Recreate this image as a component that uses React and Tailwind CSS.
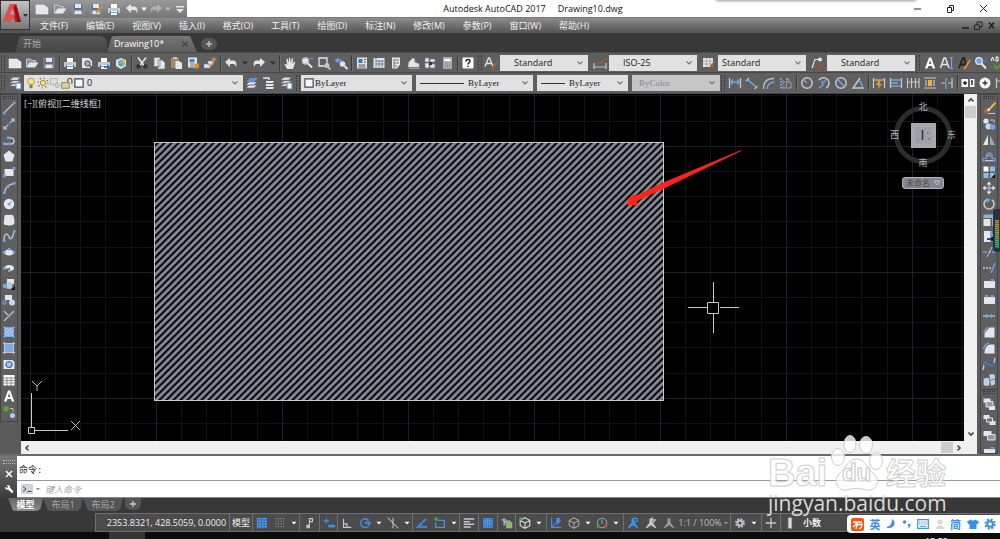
import React, { useState } from "react";
import clsx from "clsx";

const W = "#e3e7ed";
const B = "#6fa4e8";
const O = "#e08a2c";
const G = "#c4c6ca";

const sheet = <path d="M2 4h8l4 3v6H2z" fill={W} stroke="#fff" strokeWidth="0.5" />;
const pencil = <path d="M8 10l5-6 1.5 1.5L9.5 12 7.5 12.5z" fill={O} />;
const dimBar = <path d="M2.5 3v10M13.5 3v10" stroke={G} strokeWidth="1.3" />;
const folder = (
  <>
    <path d="M2.5 12V4h4l1 1.5h4V8" fill="#8292a4" stroke={G} />
    <path d="M2.5 12.5l3-5h9l-3.5 5z" fill={W} />
  </>
);
const disk = (
  <>
    <path d="M3 3h10v10H3z" fill="#5d7088" stroke="#8ea2bb" strokeWidth="0.8" />
    <path d="M5 3h6v4H5zM4.5 9.5h7v3.5h-7z" fill={W} />
  </>
);
const printer = (
  <>
    <path d="M5 3h6v4H5zM5 10h6v4H5z" fill="#fff" />
    <path d="M2 7h12v5h-2v-2H4v2H2z" fill={G} />
    <path d="M5 11.5h6" stroke={B} />
  </>
);
const undoArrow = <path d="M2 7l5-4v2.5h3c3 0 4 2 3 7-.5-3-1.500-3.500-3-3.500H7V12z" fill={W} />;
const gear = (
  <>
    <circle cx="8" cy="8" r="4.400" fill="none" stroke="currentColor" strokeWidth="2.400" strokeDasharray="2 1.450" />
    <circle cx="8" cy="8" r="2.800" fill="none" stroke="currentColor" strokeWidth="2" />
  </>
);

const ICONS = {
  new: sheet,
  open: folder,
  save: disk,
  saveas: <>{disk}{pencil}</>,
  print: printer,
  undo: undoArrow,
  redo: <g transform="matrix(-1 0 0 1 16 0)">{undoArrow}</g>,
  down: <path d="M4 6h8l-4 4.500z" fill="currentColor" />,
  more: <path d="M4 5h8v1.500H4zM4 8h8l-4 4z" fill={W} />,
  preview: (
    <>
      <path d="M3 3h7l3 3v7H3z" fill={W} />
      <circle cx="8.500" cy="8.500" r="2.700" fill="#9fb2c8" stroke="#444" />
      <path d="M10.500 10.500l3 3" stroke="#444" strokeWidth="1.500" />
    </>
  ),
  publish: <>{printer}<path d="M8 11h3V9l3.500 3-3.500 3v-2H8z" fill="#3873c4" /></>,
  dwf: (
    <>
      <path d="M3 5l5-2 5 2v6l-5 3-5-3z" fill={W} />
      <circle cx="8.500" cy="8" r="3.600" fill="#65b4d4" />
      <path d="M9 4.500a3.500 3.500 0 0 1 3 4H9z" fill="#e4a646" />
      <path d="M5.500 9h3v3z" fill="#68a842" />
    </>
  ),
  cut: (
    <>
      <path d="M4 2.500l6 8M12 2.500l-6 8" stroke={W} strokeWidth="1.500" />
      <path d="M4.500 10a1.500 1.500 0 1 0 .1 0M11.500 10a1.500 1.500 0 1 0 .1 0" fill="none" stroke="#222" strokeWidth="1.300" />
    </>
  ),
  copy: <path d="M3 2.500h6v9H3zM7 5h4l3 2.500V14H7z" fill={W} stroke="#777" strokeWidth="0.700" />,
  paste: (
    <>
      <path d="M3 3h8v10H3z" fill="#a9885e" />
      <path d="M5 2h4v2H5z" fill={G} />
      <path d="M7.500 6h3.500l3 2v6H7.500z" fill={W} />
    </>
  ),
  match: (
    <>
      <path d="M3 2.500h9v10H3z" fill={W} />
      <path d="M4.500 4h5v3.500h-5z" fill="#4f84cc" />
      <path d="M5 9h5M5 11h4" stroke="#777" />
      <path d="M9 11l2-2.500h3V13l-3 1z" fill={O} />
    </>
  ),
  block: (
    <>
      <path d="M2 9h6v4H2zM6 6h5v4H6z" fill={W} stroke="#889" strokeWidth="0.600" />
      <path d="M12 2v5M9.500 4.500h5M8 12l4-5" stroke={O} strokeWidth="1.400" />
    </>
  ),
  pan: (
    <path d="M5 14L2.500 9.500l1-.8L5 10 4.500 4l1.200-.3L7 8V2.800h1.200L8.700 8 10 3.300l1.200.3L10.500 9l1.800-2.500 1 .6L11 14z" fill={W} />
  ),
  zoom: (
    <>
      <circle cx="6.500" cy="6" r="3" fill={W} stroke={G} strokeWidth="1.400" />
      <path d="M9 8.500l4 4" stroke={W} strokeWidth="2" />
      <path d="M11 3.500h3" stroke={B} />
    </>
  ),
  zoomwin: (
    <>
      <path d="M3 3h8v8H3z" fill="none" stroke={W} strokeWidth="1.300" />
      <circle cx="11" cy="10.500" r="2.500" fill={G} />
      <path d="M12.500 12.500l2 2" stroke={W} strokeWidth="1.500" />
    </>
  ),
  zoomprev: (
    <>
      <path d="M1.500 5.500l4-3v2h3v2h-3v2z" fill={B} />
      <circle cx="9.500" cy="9" r="2.700" fill={W} />
      <path d="M11.500 11l3 3" stroke={W} strokeWidth="1.800" />
    </>
  ),
  props: (
    <>
      <path d="M3 2.500h10v11H3z" fill={W} />
      <path d="M4.500 4h4v4h-4z" fill="#3974c6" />
      <path d="M10 4.500h2M10 7h2M4.500 10h7M4.500 12h7" stroke="#555" />
    </>
  ),
  center: (
    <>
      <path d="M2.500 3h11v10h-11z" fill={W} />
      <path d="M5 3v10M5 6h8M5 9h8M8 5v8M11 5v8" stroke="#68809c" />
    </>
  ),
  palettes: (
    <>
      <path d="M4 2.500h8v7l-3 4H4z" fill={W} />
      <path d="M6 4v9M6 5h5M6 8h5M6 11h3" stroke="#777" />
    </>
  ),
  sheets: <path d="M3 12l1-5 4-4 2 2-1 2 5 2v3zM4 13.500h11" fill={W} stroke={G} strokeWidth="0.600" />,
  markup: (
    <>
      <path d="M3 3h4v4H3zM8 4h5v3H8zM3 8h4v5H3zM8 9h5v4H8z" fill={W} stroke="#68809c" strokeWidth="0.700" />
      <path d="M7 7h3v3H7z" fill="#333" />
    </>
  ),
  calc: (
    <>
      <path d="M4.500 2.500h8v11h-8z" fill="#aeb8c4" stroke={G} strokeWidth="0.600" />
      <path d="M5.500 4h6v2h-6z" fill="#fff" />
      <path d="M5.500 8h6M5.500 10h6M5.500 12h6" stroke="#6d7782" strokeDasharray="1.400 0.800" />
    </>
  ),
  help: (
    <>
      <rect x="2.500" y="2.500" width="11" height="11" rx="1" fill="#fff" />
      <path d="M6 6.500c0-3 4.500-2.500 4 0-.3 1.200-2 1-2 3M8 10.700v1.300" fill="none" stroke="#222" strokeWidth="1.500" />
    </>
  ),
  textstyle: (
    <>
      <path d="M2 11.500L5.500 3h1L10 11.500M3.500 8.500h5" fill="none" stroke={W} strokeWidth="1.300" />
      <path d="M14 6L9.500 11l-1.500 3.500c3 0 3.500-1 3.500-2.500L14.500 7z" fill="#b0622c" />
    </>
  ),
  dimstyle: (
    <>
      <path d="M2 8v6M14 8v6M2 12h12" stroke={G} strokeWidth="1.200" />
      <path d="M14 2L9.500 6.500 5 7.500c1 2.500 4 2 5.500 0L14.500 3z" fill="#a85822" />
    </>
  ),
  tablestyle: (
    <>
      <path d="M2 3h10v9H2z" fill={W} />
      <path d="M2 6h10M2 9h10M5.500 3v9M9 3v9" stroke="#999" strokeWidth="0.700" />
      <path d="M14.500 5L10 9.500 8.500 13c3 0 3.500-1 3.500-2.500z" fill="#b0622c" />
    </>
  ),
  leader: (
    <>
      <path d="M2 13L5 4.500h4" fill="none" stroke={W} strokeWidth="1.200" />
      <circle cx="10" cy="4.500" r="2" fill={W} />
      <path d="M14 7l-4 3-2.500 4c3 0 4.500-1 5-3z" fill="#a85822" />
    </>
  ),
  bigA: <path d="M3 13.500L7 2.500h2.200l4 11h-2.400l-.8-2.500H6.300l-.8 2.500zM6.900 9h2.500L8.100 5z" fill="#fff" fillRule="evenodd" />,
  textA: (
    <>
      <path d="M1.500 13L5 3h1.500L10 13M3 9.500h5.500" fill="none" stroke={W} strokeWidth="1.500" />
      <path d="M12.500 2.500v11M11 2.500h3M11 13.500h3" stroke={B} strokeWidth="1.200" />
    </>
  ),
  editA: (
    <>
      <path d="M3 13L7 3h1l2.500 8M4.500 9.500h5" fill="none" stroke="#222" strokeWidth="1.800" />
      <path d="M14 5L9 13l-1 1" stroke={O} strokeWidth="2" />
    </>
  ),
  find: (
    <>
      <circle cx="6" cy="6" r="3.300" fill={B} stroke={W} strokeWidth="1.200" />
      <path d="M8.500 8.500l4.500 5" stroke={W} strokeWidth="2" />
      <path d="M11 3v6M13 4v4" stroke="#3974c6" />
    </>
  ),
  spell: (
    <>
      <path d="M1 6l1.500-4L4 6M6 2v4h2V2zM13 2.500h-2v3h2" fill="none" stroke="#fff" />
      <path d="M4 10l3 3.500L13 7" fill="none" stroke="#4ca32c" strokeWidth="2" />
    </>
  ),
  layers: (
    <>
      <path d="M3 5l3-2.500h7L10.500 5zM3 8l3-2h7l-2.500 2zM3 11l3-2h7l-2.500 2z" fill={W} stroke="#888" strokeWidth="0.500" />
      <path d="M9 8h5v6H9z" fill="#fff" stroke="#4f84cc" />
    </>
  ),
  layerup: (
    <>
      <path d="M2 13l3-3h8l-3 3zM2 10l3-3h8l-3 3z" fill={W} stroke="#667" strokeWidth="0.600" />
      <path d="M2 7l4-4h8l-4 4z" fill="#5d93d8" />
    </>
  ),
  layerprev: (
    <>
      <path d="M5 6h8l-1 2H5zM5 9h8l-1 2H5zM5 12h8l-1 2H5z" fill={W} />
      <path d="M2 3h6v2" fill="none" stroke={W} strokeWidth="1.400" />
    </>
  ),
  bulb: (
    <>
      <circle cx="8" cy="6" r="4.500" fill="#f8e08a" stroke="#a98a2e" strokeWidth="1" />
      <path d="M6 10.500h4V15H6z" fill="#777" />
    </>
  ),
  sun: (
    <>
      <circle cx="8" cy="8" r="3.500" fill="#f6df7e" stroke="#8c7a3a" />
      <circle cx="8" cy="8" r="6.500" fill="none" stroke="#8c7a3a" strokeDasharray="1.600 3.500" strokeWidth="2" />
    </>
  ),
  vpfreeze: (
    <>
      <path d="M2 2h9v8H2z" fill="#ddd" stroke="#aaa" />
      <circle cx="11" cy="11" r="3.200" fill="#ccc" stroke="#999" strokeDasharray="1.500 1" />
    </>
  ),
  lock: (
    <>
      <path d="M1 7.500h10V15H1z" fill="#e0d294" stroke="#74693a" />
      <path d="M9 7V4.500C9 1 14.500 1 14.500 4.500V9" fill="none" stroke="#666" strokeWidth="1.800" />
    </>
  ),
  swatch: <path d="M2.500 2.500h11v11h-11z" fill="#f7faff" stroke="#3c4d63" strokeWidth="1.600" />,
  dimlin: <>{dimBar}<path d="M3.500 7h9M6 4.500L3.500 7 6 9.500M10 4.500L12.500 7 10 9.500" fill="none" stroke={B} strokeWidth="1.300" /></>,
  dimalign: <><path d="M2 6l3-3M10.500 14l3-3" stroke={G} strokeWidth="1.300" /><path d="M4 5l8 7" stroke={B} strokeWidth="1.600" /></>,
  dimarc: <><path d="M2.500 14C2.500 7 6 3.500 13 3.500" fill="none" stroke={G} strokeWidth="1.300" /><path d="M6 14c0-4 2-6 7.500-7" fill="none" stroke={B} strokeWidth="1.600" /></>,
  dimord: <><path d="M3 3v10h4M9 3l4 5v5H8z" fill="none" stroke={G} strokeDasharray="2 1" /><path d="M5 7h7M5 5v9M10 3v5" stroke={B} strokeDasharray="2 1" /></>,
  radius: <><circle cx="8" cy="8" r="5.200" fill="none" stroke={G} strokeWidth="1.500" /><path d="M8 8L4.500 4.500" stroke={B} strokeWidth="1.500" /></>,
  jogged: <><path d="M3 5c3-4 10-2 10 3 0 3-1 4-3 5" fill="none" stroke={G} strokeWidth="1.500" /><path d="M3 13l4-3-1-3 4-1" fill="none" stroke={B} strokeWidth="1.400" /></>,
  diameter: <><circle cx="8" cy="8" r="5.200" fill="none" stroke={G} strokeWidth="1.500" /><path d="M4.500 4.500l7 7" stroke={B} strokeWidth="1.600" /></>,
  angular: <><path d="M10 3L3 13h11" fill="none" stroke={G} strokeWidth="1.500" /><path d="M9 6c2 1 3 3 3 6" fill="none" stroke={B} strokeWidth="1.400" /></>,
  quick: <>{dimBar}<path d="M3 5h10" stroke={G} /><path d="M8 5l-3 5h2.500L7 14l4-5H8.500L10 5z" fill="#f09a28" /></>,
  base: <>{dimBar}<path d="M3 5h10M3 11h10" stroke={B} strokeWidth="1.500" /><path d="M3 8h7" stroke={G} /></>,
  cont: <path d="M2.500 3v10M6.500 3v10M10.500 3v10M14 3v10M2.500 7H14" stroke={G} strokeWidth="1.200" />,
  space: <><path d="M2 3h12M2 13h12M4 5v6M12 5v6" stroke={G} strokeWidth="1.200" /><path d="M6 5h4v6H6z" fill="#e7b437" /></>,
  brk: <><path d="M2 8h5M9 8h5M13 3v10" stroke={G} strokeWidth="1.200" /><path d="M7 3v4M7 9v5" stroke={B} strokeWidth="1.400" /></>,
  tol: <><path d="M1.500 4h13v8h-13z" fill="#fff" /><path d="M3 8h4M5 6v4M9 4v8M11 6h1v4" fill="none" stroke="#222" strokeWidth="1.400" /></>,
  cmark: <><circle cx="8" cy="8" r="5.500" fill="#f4f4f4" /><path d="M5.500 8h5M8 5.500v5" stroke="#333" strokeWidth="1.300" /></>,
  insp: <>{dimBar}<path d="M3 6h8" stroke={G} /><path d="M6 11l3 3 4-5" fill="none" stroke="#4ca32c" strokeWidth="2" /></>,

  line: <><path d="M3 13L13 3" stroke={G} strokeWidth="1.300" /><path d="M2 12h2.500v2.500H2zM12 1.500h2.500V4H12z" fill={B} /></>,
  xline: <><path d="M3.500 12.500l9-9M3 10v3h3M10 3h3v3" fill="none" stroke={G} strokeWidth="1.200" /><path d="M6.500 6.500h3v3h-3z" fill="#3f7ad0" /></>,
  pline: <><path d="M4 12h6c4 0 4-6 0-6H8" fill="none" stroke={G} strokeWidth="1.400" /><path d="M2 10.500h2.800v2.800H2zM7 10.500h2.800v2.800H7zM6 4.500h2.800v2.800H6z" fill={B} /></>,
  polygon: <path d="M8 2.500l5.500 4.300-2 6.700h-7l-2-6.700z" fill={W} />,
  rect: <><path d="M3.500 5h9v7h-9z" fill={W} /><path d="M2 10.500h2.800v2.800H2zM11.500 3h2.800v2.800h-2.800z" fill={B} /></>,
  arc: <><path d="M3.500 13C4 8 7 4.500 13 3.500" fill="none" stroke={G} strokeWidth="1.400" /><path d="M2 11.500h2.600v2.600H2zM5.500 5.500h2.600v2.600H5.500zM12 2h2.600v2.600H12z" fill={B} /></>,
  circle: <><circle cx="8" cy="8" r="5.200" fill={W} /><path d="M8 8l3-3" stroke={B} /><path d="M6.800 6.800h2.600v2.600H6.800z" fill={B} /></>,
  cloud: <path d="M3.500 3.500c2-1.500 3 0 4.500-.5 2-.6 3 .2 4.500.5l.5 3c1 2 0 3.500.4 5-.8 2-3 1.500-4.400 2-2 .5-2.500-1-5-.5-1.500-.8-1.500-2-1-3.500z" fill={W} />,
  spline: <><path d="M3 13c0-10 4-7 5-4 1.500 4 4 1 5-6" fill="none" stroke={G} strokeWidth="1.400" /><path d="M2 11.500h2.600v2.600H2zM7 8h2.600v2.600H7zM12 2h2.600v2.600H12z" fill={B} /></>,
  ellipse: <><ellipse cx="8" cy="8.500" rx="5" ry="3" fill={W} /><path d="M2 7h2.500v2.500H2zM11.500 7H14v2.500h-2.500zM7 4h2.500v2.500H7z" fill={B} /></>,
  ellarc: <><path d="M3 9c0-5 10-5 10-1 0 2-2 3-4 3V8z" fill={W} /><path d="M2 7h2.500v2.500H2zM7 9.500h2.500V12H7z" fill={B} /></>,
  insert: <><path d="M6 3h7v5H6z" fill={W} /><circle cx="8" cy="9.500" r="3.500" fill="#b9c8dc" /><path d="M2 8h4v4H2z" fill={B} /><path d="M10 14l4-4v4z" fill="#111" /></>,
  make: <><path d="M4 3h7v5H4z" fill={W} /><circle cx="11" cy="10.500" r="3" fill="#d2d8e2" /><path d="M2 9h3v3H2z" fill="none" stroke={B} /></>,
  point: <><path d="M3 3l5 5M3 13L13 3" stroke={G} strokeWidth="1.200" /><path d="M6.800 6.800h2.500v2.500H6.800z" fill={B} /></>,
  hatch: <><path d="M3.500 3.500h9v9h-9z" fill="#9dc3ef" stroke={W} /><path d="M4 8l4-4M4 12l8-8M8 12l4-4" stroke="#6f9dd4" strokeWidth="0.800" /><path d="M2 3.500h12M3.500 2v12M12.500 2v12M2 12.500h12" stroke={B} strokeWidth="0.900" /></>,
  gradient: <><path d="M3.500 3.500h9v9h-9z" fill="#7cabe5" /><path d="M2 3.500h12M3.500 2v12M12.500 2v12M2 12.500h12" stroke={G} strokeWidth="1.100" /></>,
  region: <><path d="M2.500 4h9l2 2v7h-11z" fill={W} /><circle cx="8" cy="8.500" r="3" fill="#a8c5ea" stroke="#3c6cae" strokeWidth="1.200" /></>,
  table: <><path d="M2.500 3h11v10.500h-11z" fill="#fff" /><path d="M2.500 6h11M2.500 8.500h11M2.500 11h11M6 5v9M10 5v9" stroke="#777" strokeWidth="0.800" /></>,
  addsel: <><circle cx="5" cy="5" r="2.800" fill="#57a834" /><path d="M9 4.500h3v3" fill="none" stroke={G} /><circle cx="11.500" cy="11.500" r="2.600" fill="#a5ccf5" /></>,

  erase: <><path d="M14 2L8 8l1.500 1.500L15 3.500z" fill="#f0b95c" /><path d="M8 8l-3 2 1.500 2L9.500 10z" fill="#eee" /><circle cx="5" cy="11" r="2" fill="#e2591e" /><path d="M7 13.500h7" stroke={G} /></>,
  copyobj: <><circle cx="5" cy="5" r="2.600" fill={W} /><circle cx="7.500" cy="10.500" r="3" fill="#c4dbf7" /><circle cx="11.500" cy="11" r="2.800" fill={B} /><path d="M9 4h4v3" fill="none" stroke={G} /></>,
  mirror: <><path d="M7 3v10H2z" fill={W} /><path d="M9 3v10h5z" fill="#98aabd" /></>,
  offset: <><path d="M2 13h12v-2.500h-3C13 3 3.500 3 5.500 10.500H2z" fill="none" stroke={B} strokeWidth="1.200" /><path d="M4 12.500h8M7 9c-1-3 3-3 2.500 0" fill="none" stroke={G} /></>,
  array: <><path d="M2.500 2.500h5v5h-5z" fill="#fff" /><path d="M9 2.500h5v5H9zM2.500 9h5v5h-5zM9 9h5v5H9z" fill="#8dbaf0" /><path d="M10 14l4-4v4z" fill="#111" /></>,
  move: <><path d="M8 1.500l2.500 3h-5zM8 14.500l2.500-3h-5zM1.500 8l3-2.500v5zM14.500 8l-3-2.500v5z" fill={W} /><path d="M8 4v8M4 8h8" stroke={W} /><path d="M6.800 6.800h2.500v2.500H6.800z" fill={B} /></>,
  rotate: <><path d="M6 3.500A5 5 0 1 0 11 4" fill="none" stroke={G} strokeWidth="1.600" /><path d="M5 2l5 1.500L6 7z" fill={B} /></>,
  scale: <><path d="M2.500 2.500h11.500V14h-3V6h-8.500z" fill="#86b2ec" /><path d="M2.500 7h7v7h-7z" fill={W} /></>,
  stretch: <><path d="M3 3h6v11H3z" fill={W} /><path d="M9 3h2l3 11H9z" fill={B} /><path d="M6 11h7M10.500 9l2.500 2-2.500 2" fill="none" stroke="#111" strokeWidth="1.400" /></>,
  trim: <><path d="M2 8h4M7.500 8H10M11 8h3" stroke={B} strokeWidth="1.300" /><path d="M6 13l5-10" stroke={G} /></>,
  extend: <><path d="M2 8h2M5 8h2M8 8h2" stroke={G} strokeWidth="1.300" /><path d="M10 13l4-10" stroke={B} strokeWidth="1.400" /></>,
  brkpt: <><path d="M3 5h11v7H3z" fill={W} /><path d="M10 3h2.600v2.600H10z" fill={B} /></>,
  brk2: <><path d="M3 5h11v7H3z" fill={W} /><path d="M4 3h2.600v2.600H4zM10 3h2.600v2.600H10z" fill={B} /></>,
  join: <><path d="M2 8h12" stroke={G} strokeWidth="1.300" /><path d="M5 5.500L8 8l-3 2.500zM11 5.500L8 8l3 2.500z" fill={B} /></>,
  chamfer: <><path d="M3.500 13.500V9l5-5.500h5v10z" fill={W} /><path d="M2.500 8L7 3" stroke={B} strokeWidth="1.500" /></>,
  fillet: <><path d="M3.500 13.500c0-6 3-9 6-9h4v9z" fill={W} /><path d="M2.500 9C3.500 5 5 4 8 3" fill="none" stroke={B} strokeWidth="1.500" /></>,
  blend: <><path d="M2 14l1-5M13 7l1-5" stroke={G} strokeWidth="1.300" /><path d="M3 7c3-3 4 5 9 1.500" fill="none" stroke="#3f7ad0" strokeWidth="1.800" /></>,
  explode: <path d="M3 7l4-1 1 1v6l-4 .5-1-1zM8.500 3l4-.5 1 1v3l-4 1zM9.500 9l4-1v4l-3 1.500z" fill="#b4cff1" stroke={W} strokeWidth="0.600" />,
  front: <><path d="M2.500 2.500h7v4h-7zM8 10h6v4H8z" fill={W} /><path d="M5 5.500h7V11H5z" fill="#8d98a5" stroke={W} /></>,
  back: <><path d="M2.500 3h6v4h-6zM8.500 9h6v4h-6z" fill={W} /><path d="M5.500 6h6v4h-6z" fill="#667180" stroke={W} /></>,
  above: <><path d="M2.500 3h8v5h-8z" fill={W} /><path d="M6.500 6.500H14V12H6.500z" fill="#8d98a5" stroke={W} /></>,
};

const Icon = ({ name, className = "size-4" }) => (
  <svg viewBox="0 0 16 16" className={clsx("shrink-0", className)} fill="none" aria-hidden="true">
    {ICONS[name]}
  </svg>
);

const Tools = ({ names, vertical }) => (
  <div className={clsx("flex shrink-0", vertical ? "flex-col" : "gap-px px-px")}>
    {names.map((name) => (
      <button key={name} title={name} className="flex size-4 items-center justify-center">
        <Icon name={name} />
      </button>
    ))}
  </div>
);

const Sep = () => <div className="mx-px h-4 w-px shrink-0 bg-[#3a3a3a] shadow-[1px_0_#707070]" />;
const Grip = () => <div className="mx-px h-4 w-1 shrink-0 border-x border-dotted border-[#353535]" />;
const Caret = () => (
  <button title="More" className="flex w-[10px] shrink-0 justify-center text-[#333]">
    <Icon name="down" className="size-3" />
  </button>
);

const Combo = ({ label, value, className, disabled, icon, selectClass }) => (
  <label
    className={clsx(
      "relative flex h-4 shrink-0 items-center",
      disabled ? "bg-[#c6c6c6] text-[#868686]" : "bg-[#e1e1e1] text-[#202020]",
      className
    )}
  >
    {icon}
    <select
      aria-label={label}
      disabled={disabled}
      defaultValue={value}
      className={clsx("h-4 min-w-0 flex-1 appearance-none bg-transparent leading-4 outline-none", selectClass)}
    >
      <option>{value}</option>
    </select>
    <svg viewBox="0 0 8 8" className="pointer-events-none absolute right-1 size-2" fill="none">
      <path d="M1.500 2.500L4 5l2.500-2.500" stroke="#777" strokeWidth="1.200" />
    </svg>
  </label>
);

const StyleCombo = ({ icon, ...rest }) => (
  <div className="flex items-center gap-px">
    <Icon name={icon} />
    <Combo className="w-[88px]" {...rest} />
  </div>
);

const styleText = "text-[9px]";
const layerText = "font-['Liberation_Serif'] text-[9px]";

const MENUS = [
  "文件(F)", "编辑(E)", "视图(V)", "插入(I)", "格式(O)", "工具(T)",
  "绘图(D)", "标注(N)", "修改(M)", "参数(P)", "窗口(W)", "帮助(H)",
];

const Header = () => (
  <header className="grid shrink-0 grid-cols-[30px_1fr] grid-rows-[17px_16px] bg-[#545454]">
    <button title="Application" className="row-span-2 flex h-[30px] items-center border border-[#333] bg-gradient-to-b from-[#c3c3c3] to-[#777]">
      <svg viewBox="0 0 28 28" className="size-7">
        <path d="M2 21L9 3h6l5 18h-6l-1-4-5 1-1 3z" fill="#c1201f" />
        <path d="M9 3h6l2 7-6 9-4 2-5 0z" fill="#e0504a" />
        <path d="M11 8l2 5-4 1z" fill="#aaa" />
        <path d="M15 3l5 18h-4L12.500 6z" fill="#941113" />
        <path d="M22 13h5l-2.500 3z" fill="#222c38" />
      </svg>
    </button>
    <div className="relative flex items-center bg-white">
      <div className="flex h-full w-[157px] shrink-0 items-center bg-gradient-to-b from-[#999] to-[#777] pl-1 text-white">
        {["new", "open", "save", "saveas", "print", "undo", "down", "redo", "down", "more"].map((n, i) => (
          <button
            key={i}
            title={n}
            className={clsx("flex shrink-0 justify-center", n === "down" ? "w-2" : "w-4", i < 5 && "mr-0.5", i > 6 && i < 9 && "opacity-40")}
          >
            <Icon name={n} className={n === "down" ? "size-3" : "size-4"} />
          </button>
        ))}
      </div>
      <h1 className="flex flex-1 justify-center gap-3 pr-[121px] text-[9px] whitespace-nowrap text-[#111]">
        <span>Autodesk AutoCAD 2017</span>
        <span>Drawing10.dwg</span>
      </h1>
      <div className="absolute -top-1 right-[84px] h-1 w-[200px] shadow-[0_1px_3px_#999]" />
      <div className="absolute right-3 flex gap-6">
        <button title="Minimize"><svg viewBox="0 0 9 9" className="size-[9px]"><path d="M1 5h7" stroke="#222" /></svg></button>
        <button title="Restore"><svg viewBox="0 0 9 9" className="size-[9px]" fill="none" stroke="#222"><path d="M1.500 3.500h4v5h-4zM3.500 3V1.500h4v5H6" /></svg></button>
        <button title="Close"><svg viewBox="0 0 9 9" className="size-[9px]"><path d="M1 1l7 7M8 1L1 8" stroke="#222" /></svg></button>
      </div>
    </div>
    <nav className="flex items-center gap-[18px] border-t border-[#777] bg-gradient-to-b from-[#8d8d8d] to-[#545454] pl-[10px] text-[9px] text-[#f2f2f2]">
      {MENUS.map((m) => (
        <button key={m} className="whitespace-nowrap">{m}</button>
      ))}
      <div className="ml-auto flex gap-1 pr-1">
        <svg viewBox="0 0 9 9" className="size-[9px]"><path d="M1 7h7" stroke="#222" strokeWidth="1.600" /></svg>
        <svg viewBox="0 0 9 9" className="size-[9px]" fill="none" stroke="#222"><path d="M.5 4h5v4.500h-5zM3 4V1h5v5H6" /></svg>
        <svg viewBox="0 0 9 9" className="size-[9px]"><path d="M2 1.500l5 6M7 1.500l-5 6" stroke="#222" strokeWidth="1.600" /></svg>
      </div>
    </nav>
  </header>
);

const FileTabs = () => (
  <div className="flex h-[19px] shrink-0 items-end bg-[#383838] pl-[15px] text-[9px]">
    <button className="flex h-4 w-[92px] items-center rounded-t-lg bg-gradient-to-b from-[#585858] to-[#464646] pl-2 text-[#aaa] [clip-path:polygon(5px_0,100%_0,100%_100%,0_100%)]">开始</button>
    <button className="flex h-4 w-[90px] items-center justify-between rounded-t-lg bg-gradient-to-b from-[#777] to-[#5e5e5e] pr-2 pl-[7px] text-white [clip-path:polygon(5px_0,83px_0,100%_100%,0_100%)]">
      Drawing10*
      <svg viewBox="0 0 8 8" className="size-2"><path d="M1.500 1.500l5 5M6.500 1.500l-5 5" stroke="#444" strokeWidth="1.200" /></svg>
    </button>
    <button title="New tab" className="mb-0.5 ml-1 flex h-3 w-4 items-center justify-center rounded-md bg-[#555] text-[#bbb]">
      <svg viewBox="0 0 8 8" className="size-2"><path d="M1 4h6M4 1v6" stroke="currentColor" strokeWidth="1.500" /></svg>
    </button>
  </div>
);

const Toolbars = () => (
  <div className="shrink-0 bg-[#545454]">
    <div className="flex h-[21px] items-center overflow-hidden border-y border-[#474747] bg-[#5f5f5f]">
      <Grip />
      <Tools names={["new", "open", "save"]} />
      <Sep />
      <Tools names={["print", "preview", "publish", "dwf"]} />
      <Sep />
      <Tools names={["cut", "copy", "paste", "match", "block"]} />
      <Sep />
      <Tools names={["undo"]} /><Caret /><Tools names={["redo"]} /><Caret />
      <Sep />
      <Tools names={["pan", "zoom", "zoomwin", "zoomprev"]} />
      <Sep />
      <Tools names={["props", "center", "palettes", "sheets", "markup", "calc"]} />
      <Sep />
      <Tools names={["help"]} />
      <Grip />
      <div className="flex items-center gap-1">
        <StyleCombo icon="textstyle" label="Text style" value="Standard" selectClass="pl-[14px] text-[9px]" />
        <StyleCombo icon="dimstyle" label="Dimension style" value="ISO-25" selectClass="pl-[14px] text-[9px]" />
        <StyleCombo icon="tablestyle" label="Table style" value="Standard" selectClass="pl-1 text-[9px]" />
        <StyleCombo icon="leader" label="Leader style" value="Standard" selectClass="pl-[14px] text-[9px]" />
      </div>
      <Grip />
      <Tools names={["bigA", "textA", "editA", "find", "spell"]} />
    </div>
    <div className="flex h-[21px] items-center overflow-hidden border-b border-[#474747] bg-[#5f5f5f]">
      <Grip />
      <Tools names={["layers"]} />
      <Combo
        label="Layer"
        value="0"
        className="w-[219px] pl-px"
        selectClass={clsx(styleText, "pl-0.5")}
        icon={
          <span className="flex">
            {["bulb", "sun", "vpfreeze", "lock", "swatch"].map((n) => (
              <Icon key={n} name={n} className="size-3" />
            ))}
          </span>
        }
      />
      <Tools names={["layerup", "layerprev", "layers"]} />
      <Grip />
      <div className="flex gap-1">
        <Combo label="Color" value="ByLayer" className="w-[111px] pl-0.5" selectClass={layerText} icon={<Icon name="swatch" className="size-3" />} />
        <Combo
          label="Linetype"
          value="ByLayer"
          className="w-[117px] pl-1"
          selectClass={clsx(layerText, "pl-1")}
          icon={<span className="h-px w-11 bg-[#333]" />}
        />
        <Combo
          label="Lineweight"
          value="ByLayer"
          className="w-[91px] pl-1"
          selectClass={clsx(layerText, "pl-1")}
          icon={<span className="h-px w-6 bg-[#333]" />}
        />
        <Combo label="Plot style" value="ByColor" disabled className="w-[88px]" selectClass={clsx(layerText, "pl-[7px]")} />
      </div>
      <Grip />
      <Tools names={["dimlin", "dimalign", "dimarc", "dimord"]} />
      <Sep />
      <Tools names={["radius", "jogged", "diameter", "angular"]} />
      <Sep />
      <Tools names={["quick", "base", "cont", "space", "brk"]} />
      <Sep />
      <Tools names={["tol", "cmark", "insp"]} />
    </div>
  </div>
);

const DRAW = [
  "line", "xline", "pline", "polygon", "rect", "arc", "circle", "cloud", "spline", "ellipse",
  "ellarc", "insert", "make", "point", "hatch", "gradient", "region", "table", "bigA", "addsel",
];
const MODIFY = [
  "erase", "copyobj", "mirror", "offset", "array", "move", "rotate", "scale", "stretch", "trim",
  "extend", "brkpt", "brk2", "join", "chamfer", "fillet", "blend", "explode",
];

const RailGrip = () => (
  <div className="w-full px-0.5 py-px">
    <div className="h-[3px] border-y border-dotted border-[#333]" />
  </div>
);

const Drawing = () => (
  <svg className="block h-full w-full" aria-hidden="true">
    <defs>
      <pattern id="grid" x="9" y="52" width="126" height="126" patternUnits="userSpaceOnUse">
        <path d="M25.500 0v126M50.500 0v126M75.500 0v126M101.500 0v126M0 25.500h126M0 50.500h126M0 75.500h126M0 101.500h126" stroke="#111216" />
        <path d="M.5 0v126M0 .5h126" stroke="#1d1f2b" />
      </pattern>
      <pattern id="ansi31" width="7" height="7" patternUnits="userSpaceOnUse">
        <path d="M-1 8L8-1M-1 1L1-1M6 8L8 6" stroke="#6d727c" strokeWidth="3.200" />
        <path d="M-1 8L8-1M-1 1L1-1M6 8L8 6" stroke="#989eaa" strokeWidth="1" />
      </pattern>
    </defs>
    <rect width="100%" height="100%" fill="#000" />
    <rect width="100%" height="100%" fill="url(#grid)" />
    <rect x="133.500" y="48.500" width="509" height="258" fill="#000" />
    <rect x="133.500" y="48.500" width="509" height="258" fill="url(#ansi31)" stroke="#c3c8d4" />
    <path d="M720 56L640 89.500 614 102l-3-2-6 10.500 11.500 1-.5-4.500L644 94l76-37z" fill="#fb2416" />
    <path d="M10.500 299v34M13 336.500h34M7.500 333.500h6v6h-6z" fill="none" stroke="#c9c9c9" />
    <path d="M11 287l5 5 5-5M16 292v5M50 327l9 9M59 327l-9 9" fill="none" stroke="#b9b9b9" />
    <path d="M692.500 188v20M692.500 220v19M667 213.500h19M699 213.500h19M686.500 208.500h11v11h-11z" fill="none" stroke="#c9c9c9" />
  </svg>
);

const Compass = () => (
  <div className="absolute top-2 right-2 flex w-[66px] flex-col items-center text-[9px] text-[#b5b5b5]">
    <div className="relative grid size-[66px] grid-cols-3 grid-rows-3 place-items-center">
      <div className="absolute inset-1 rounded-full border-[5px] border-[#2c2c2c]" />
      <span className="relative col-start-2 self-start leading-[10px]">北</span>
      <span className="relative col-start-1 row-start-2 justify-self-start">西</span>
      <button title="Top" className="relative col-start-2 row-start-2 flex size-[25px] items-center justify-center border-4 border-[#a9a9a9] bg-[#9ea1aa]">
        <svg viewBox="0 0 16 16" className="size-4"><path d="M7.500 3v10" stroke="#333" strokeWidth="1.500" /><path d="M12 6h2M13 12h2M2 13h1" stroke="#666" /></svg>
      </button>
      <span className="relative col-start-3 row-start-2 justify-self-end">东</span>
      <span className="relative col-start-2 row-start-3 self-end leading-[10px]">南</span>
    </div>
    <button className="mt-[9px] flex h-3 w-[42px] items-center justify-center gap-1 rounded-[3px] border border-[#b0b2ba] bg-[#85878f] text-[8px] text-[#4a4a4a]">
      未命名
      <svg viewBox="0 0 6 6" className="size-1.5"><path d="M0 1h6L3 5z" fill="none" stroke="#bbb" /></svg>
    </button>
  </div>
);

const Chevron = ({ d }) => (
  <svg viewBox="0 0 8 8" className="size-2" fill="none"><path d={d} stroke="#444" strokeWidth="1.600" /></svg>
);

const Workspace = () => (
  <main className="flex min-h-0 flex-1 overflow-hidden bg-[#5b5b5b]">
    <aside className="w-[18px] shrink-0">
      <div className="flex flex-col items-center border border-[#454545] bg-[#5f5f5f] pb-px">
        <RailGrip />
        <Tools names={DRAW} vertical />
      </div>
    </aside>
    <div className="ml-[3px] flex min-w-0 flex-1 flex-col">
      <div className="flex min-h-0 flex-1">
        <div className="relative min-w-0 flex-1 overflow-hidden bg-black">
          <div className="absolute inset-0"><Drawing /></div>
          <button className="absolute top-[3px] left-[3px] text-[9px] text-[#d2d2d2]">[−][俯视][二维线框]</button>
          <Compass />
        </div>
        <div className="flex w-[13px] shrink-0 flex-col items-center justify-between bg-[#f0f0f0] pb-px">
          <div className="flex w-full flex-col items-center">
            <button title="Scroll up" className="flex h-3 items-center"><Chevron d="M1.500 5.500L4 3l2.500 2.500" /></button>
            <div className="h-3 w-[11px] bg-[#cdcdcd]" />
          </div>
          <button title="Scroll down" className="flex h-3 items-center"><Chevron d="M1.500 2.500L4 5l2.500-2.500" /></button>
        </div>
      </div>
      <div className="flex h-[13px] shrink-0 items-center bg-[#f0f0f0] pl-0.5">
        <button title="Scroll left" className="flex-1"><Chevron d="M5.500 1.500L3 4l2.500 2.500" /></button>
        <div className="h-[11px] w-3 bg-[#cdcdcd]" />
        <button title="Scroll right" className="pr-[14px] pl-0.5"><Chevron d="M2.500 1.500L5 4 2.500 6.500" /></button>
      </div>
    </div>
    <aside className="relative ml-[3px] w-5 shrink-0">
      <div className="flex h-full w-[18px] flex-col items-center overflow-hidden border border-[#454545] bg-[#5f5f5f]">
        <RailGrip />
        <Tools names={MODIFY} vertical />
        <div className="mt-px w-full border-t border-[#3c3c3c] pb-px"><RailGrip /></div>
        <Tools names={["front", "back", "above", "brkpt"]} vertical />
      </div>
      <div className="absolute top-[115px] right-0 flex h-[43px] w-[7px] items-end rounded-l-sm bg-[#2b3040] pb-1 pl-0.5">
        <div className="h-7 w-1 bg-[repeating-linear-gradient(transparent_0_1px,#2b304080_1px_2px),linear-gradient(#b08a58,#8fa050,#2fb08c)]" />
      </div>
    </aside>
  </main>
);

const CommandLine = () => {
  const [cmd, setCmd] = useState("");
  return (
    <section className="flex h-[44px] shrink-0 border-t-2 border-[#6b6b6b] bg-white text-[9px]">
      <div className="flex w-[17px] shrink-0 flex-col items-center justify-between bg-gradient-to-b from-[#777] to-[#3c3c3c] py-1">
        <div className="h-1 w-3 border-y border-dotted border-[#bbb]" />
        <button title="Close"><svg viewBox="0 0 8 8" className="size-2"><path d="M1 1l6 6M7 1L1 7" stroke="#fff" strokeWidth="1.500" /></svg></button>
        <button title="Customize">
          <svg viewBox="0 0 10 10" className="size-[10px]"><path d="M1 3l2 1 1-1-1-2c2-.5 3.500 1 3 2.800L9.500 7.500 8 9.200 4 5.500C2.500 6 .8 5 1 3z" fill="#fff" /></svg>
        </button>
      </div>
      <div className="flex flex-1 flex-col">
        <p className="flex flex-1 items-end border-b border-[#999] pb-0.5 pl-0.5 font-['Liberation_Mono','Noto_Sans_CJK_SC',monospace] text-[#222]">命令:</p>
        <label className="flex h-[17px] items-center border-b border-[#888] pl-1">
          <svg viewBox="0 0 12 10" className="h-[10px] w-3"><path d="M0 0h12v10H0z" fill="#cfd4da" /><path d="M2 2.500L5 5 2 7.500M6.500 7.500h4" fill="none" stroke="#445" /></svg>
          <Icon name="down" className="mx-px size-2 text-[#888]" />
          <input
            aria-label="Command"
            value={cmd}
            onChange={(e) => setCmd(e.target.value)}
            placeholder="键入命令"
            className="h-4 flex-1 pl-0.5 outline-none placeholder:text-[#a5a5a5] placeholder:italic"
          />
        </label>
      </div>
    </section>
  );
};

const LayoutTabs = () => (
  <div className="flex h-[15px] shrink-0 items-start bg-[#383838] pl-2 text-[9px] text-[#a8a8a8]">
    <button className="h-[13px] w-[35px] rounded-b-lg bg-gradient-to-b from-[#666] to-[#8c8c8c] leading-[13px] font-bold text-white [clip-path:polygon(0_0,100%_0,32px_100%,5px_100%)]">模型</button>
    <button className="h-[13px] w-10 rounded-b-lg bg-[#555] leading-[13px] [clip-path:polygon(0_0,100%_0,37px_100%,5px_100%)]">布局1</button>
    <button className="h-[13px] w-10 rounded-b-lg bg-[#555] leading-[13px] [clip-path:polygon(0_0,100%_0,37px_100%,5px_100%)]">布局2</button>
    <button title="New layout" className="ml-0.5 flex h-3 w-4 items-center justify-center rounded-b-md bg-[#555] text-[#ccc]">
      <svg viewBox="0 0 8 8" className="size-2"><path d="M1 4h6M4 1v6" stroke="currentColor" strokeWidth="1.300" /></svg>
    </button>
  </div>
);

const S = "#3d93f2";
const STATUS = {
  gridon: <path d="M3 2v12M6 2v12M9 2v12M12 2v12M2 3h12M2 6h12M2 9h12M2 12h12" stroke={S} strokeWidth="1.500" />,
  snap: <path d="M3 3h10M3 6h10M3 9h10M3 12h10" stroke="#999" strokeWidth="1.200" strokeDasharray="1.200 1.600" />,
  infer: <><path d="M8.500 11V3h3.500v3.500H8.500" stroke={G} strokeWidth="1.300" /><path d="M5 10h4v4H5z" fill={G} /></>,
  dyn: <><path d="M2 5.500h6M5 2.500v6" stroke={S} strokeWidth="1.400" /><path d="M7 10h8v3H7z" fill={S} /></>,
  ortho: <path d="M4 3v10h9M4 9h4v4" stroke={G} strokeWidth="1.300" />,
  polar: <><path d="M12.500 10.500A5 5 0 1 1 12 5M8 8h6" stroke={S} strokeWidth="1.500" /><path d="M11 5.500L15 8l-4 2.500M8 8l4-4" stroke={S} /></>,
  iso: <path d="M2 2l12 12M8 2v12" stroke={G} strokeWidth="1.200" />,
  track: <><path d="M13 3L3 12.500h11" stroke={S} strokeWidth="1.600" /><path d="M7 9l2 3" stroke={S} /></>,
  osnap: <><path d="M5 5h8v8H3V7" stroke={S} strokeWidth="1.500" /><circle cx="3.500" cy="3.500" r="2" fill="#2eb82e" /></>,
  lwt: <path d="M2 3.500h12M2 6.500h7M2 9.500h12M2 12.500h8" stroke={G} strokeWidth="1.600" />,
  transp: <><path d="M3 3h10v10H3z" fill="#2a6db8" stroke={S} /><path d="M5 3v10M7.500 3v10M10 3v10M3 5h10M3 7.500h10M3 10h10" stroke="#6aabf5" strokeWidth="0.700" /></>,
  cycle: <><path d="M1.500 4.500h6M4.500 2v5" stroke={G} /><path d="M4 5h8v3H6v3H4z" fill="#aaa" /><path d="M7 7h7v7H7z" fill="#8abb6e" /></>,
  cube: <path d="M8 2l5.500 3v6L8 14l-5.500-3V5zM2.500 5L8 8l5.500-3M8 8v6" stroke="#b5b5b5" strokeWidth="1.100" />,
  isolate: <><path d="M8 2l5.500 3v6L8 14l-5.500-3V5zM2.500 5L8 8l5.500-3M8 8v6" stroke="#d5d5d5" strokeWidth="1.300" /><circle cx="3" cy="3.500" r="2" fill="#2eb82e" /></>,
  ucs: <><path d="M3 2v11h11M3 13l6-6" stroke={S} strokeWidth="1.300" /><path d="M9 2l-1 5h2l-1 4 5-6h-2.500L13 2z" fill={S} /></>,
  gizmo: <><circle cx="8" cy="8" r="5.500" stroke="#999" strokeWidth="1.200" /><path d="M8 4v5" stroke={S} strokeWidth="1.500" /><path d="M2 13l3-3" stroke="#4ca32c" strokeWidth="2" /><path d="M14 13l-3-3" stroke="#d8402a" strokeWidth="2" /></>,
  anno: <path d="M6.500 2.500h3L10 8l4 5-1 1-5-3.500L3 14l-1-1 4-5z" fill="currentColor" />,
  annovis: <><path d="M6.500 2.500h3L10 8l4 5-1 1-5-3.500L3 14l-1-1 4-5z" fill="currentColor" /><circle cx="10.500" cy="4.500" r="2.400" stroke="currentColor" strokeWidth="1.300" /></>,
  annoauto: <><path d="M6.500 2.500h3L10 8l4 5-1 1-5-3.500L3 14l-1-1 4-5z" fill="currentColor" /><path d="M10 1.500l-1 3h4l-3 4" stroke="currentColor" strokeWidth="1.300" /></>,
  gear,
  plus: <path d="M2 8h12M8 2v12" stroke={G} strokeWidth="1.500" />,
  ruler: <path d="M6 2h4v12H6z" fill="#ddd" stroke="#999" strokeDasharray="1 1" />,
};

const St = ({ n, className }) => (
  <button title={n} className={clsx("flex w-[18px] shrink-0 justify-center", className)}>
    <svg viewBox="0 0 16 16" className="size-[14px]" fill="none">{STATUS[n]}</svg>
  </button>
);
const StDown = () => (
  <button title="Options" className="flex w-[10px] shrink-0 justify-center text-white"><Icon name="down" className="size-[10px]" /></button>
);
const Cell = ({ children, className }) => (
  <div className={clsx("flex h-full shrink-0 items-center border-r border-[#707070]", className)}>{children}</div>
);

const StatusBar = () => (
  <footer className="relative h-[19px] shrink-0 bg-[#383838] pl-[95px] text-[9px] text-[#eee]">
    <div className="flex h-full items-center overflow-hidden border border-[#6e6e6e] bg-[#4b4b4b]">
      <Cell className="w-[134px] justify-center pl-2">2353.8321, 428.5059, 0.0000</Cell>
      <Cell className="px-0.5">模型</Cell>
      <Cell className="w-[47px]"><St n="gridon" /><St n="snap" /><StDown /></Cell>
      <Cell className="w-5"><St n="infer" /></Cell>
      <Cell className="w-[18px]"><St n="dyn" /></Cell>
      <Cell className="w-[75px]"><St n="ortho" /><St n="polar" /><StDown /><St n="iso" /><StDown /></Cell>
      <Cell className="w-[47px]"><St n="track" /><St n="osnap" /><StDown /></Cell>
      <Cell className="w-[19px]"><St n="lwt" /></Cell>
      <Cell className="w-[19px]"><St n="transp" /></Cell>
      <Cell className="w-[18px]"><St n="cycle" /></Cell>
      <Cell className="w-[31px]"><St n="isolate" /><StDown /></Cell>
      <Cell className="w-[77px]"><St n="ucs" /><St n="cube" /><StDown /><St n="gizmo" /><StDown /></Cell>
      <Cell className="w-[107px]">
        <St n="annovis" className="text-[#3d93f2]" />
        <St n="annoauto" className="text-[#c4c6ca]" />
        <St n="anno" className="text-[#999]" />
        <span className="flex-1 text-center whitespace-nowrap text-[#bbb]">1:1 / 100%</span>
        <Icon name="down" className="size-2 text-[#999]" />
      </Cell>
      <Cell className="w-[31px]"><St n="gear" className="text-[#c4c6ca]" /><StDown /></Cell>
      <Cell className="w-[19px]"><St n="plus" /></Cell>
      <div className="flex w-[74px] shrink-0 items-center">
        <St n="ruler" />
        <span className="ml-1 flex-1 font-bold">小数</span>
        <StDown />
      </div>
    </div>
    <ImeBar />
  </footer>
);

const ImeBar = () => (
  <div className="absolute top-0.5 right-0 flex h-[18px] w-[153px] items-center justify-between rounded-l bg-white px-1 text-[11px] font-bold text-[#3d90e3]">
    <svg viewBox="0 0 13 13" className="size-[13px]"><rect width="13" height="13" rx="2" fill="#fb5312" /><path d="M2 4h9M4 4l1.500 2L2 9M6 7l5-1c0 3-1 4.500-3 4.500M6.500 4L5 11" fill="none" stroke="#fff" strokeWidth="1.300" /></svg>
    <button className="leading-none">英</button>
    <svg viewBox="0 0 10 10" className="size-[10px]"><path d="M6.500.5c3 3 2 9-5.500 8 3.500-1 5.500-4 5.500-8z" fill="currentColor" stroke="currentColor" /></svg>
    <svg viewBox="0 0 10 10" className="size-[10px]"><circle cx="2.500" cy="3" r="1.700" fill="currentColor" /><path d="M6 5h2.500c0 2-.5 3.500-2.500 4.500l1-2.500H6z" fill="currentColor" /></svg>
    <svg viewBox="0 0 12 10" className="h-[10px] w-3" fill="none" stroke="currentColor"><path d="M.7.7h10.600v8.600H.7z" strokeWidth="1.200" /><path d="M2 3h8M2 5h8" strokeDasharray="1.300 0.900" /><path d="M3 7.300h6" /></svg>
    <svg viewBox="0 0 10 10" className="size-[10px] text-[#d6d6d6]"><circle cx="5" cy="3" r="2.500" fill="currentColor" /><path d="M1 10c0-5 8-5 8 0z" fill="currentColor" /></svg>
    <button className="leading-none">简</button>
    <svg viewBox="0 0 12 10" className="h-[10px] w-3"><path d="M0 2.500L4 .5c1 1.500 3 1.500 4 0l4 2-1.500 3L9.500 5v5h-7V5l-1 .5z" fill="currentColor" /></svg>
    <svg viewBox="2 2 12 12" className="size-[12px]" fill="none">{gear}</svg>
  </div>
);

const Watermark = () => (
  <div className="pointer-events-none absolute right-[54px] bottom-[22px] w-[178px] font-bold text-white/90">
    <div className="flex h-[46px] items-end justify-between leading-none">
      <span className="font-['Liberation_Sans'] text-[38px] leading-8 [-webkit-text-stroke:1px_#cfcfcf]">Bai</span>
      <div className="relative flex h-[54px] w-[54px] shrink-0 items-end justify-center">
        <svg viewBox="0 0 54 56" className="absolute inset-0 h-[56px] w-[54px]" fill="#fff" fillOpacity="0.8" stroke="#ccc">
          <ellipse cx="8" cy="22" rx="6.500" ry="8.500" />
          <ellipse cx="20" cy="9" rx="6" ry="8.500" />
          <ellipse cx="36" cy="10" rx="6.500" ry="8.500" />
          <ellipse cx="46" cy="26" rx="6.500" ry="8.500" />
          <path d="M27 24c8 0 10 10 17 15 7 8 2 17-7 16-7-2-14-2-20 0-10 1-14-9-8-16 6-5 9-15 18-15z" />
        </svg>
        <span className="relative mb-1 font-['Liberation_Sans'] text-[24px] leading-6 text-white/90 [-webkit-text-stroke:1px_#c6c6c6]">du</span>
      </div>
      <span className="text-[30px] leading-8 [-webkit-text-stroke:1px_#cfcfcf]">经验</span>
    </div>
    <p className="text-[21px] leading-7 font-normal text-[#dadada]">jingyan.baidu.com</p>
  </div>
);

const App = () => (
  <div className="relative flex h-screen w-full flex-col overflow-hidden bg-[#383838] font-['Open_Sans','Noto_Sans_CJK_SC',sans-serif] select-none">
    <Header />
    <FileTabs />
    <Toolbars />
    <Workspace />
    <CommandLine />
    <LayoutTabs />
    <StatusBar />
    <div className="flex h-[7px] shrink-0 items-start justify-between overflow-hidden bg-[#0c0c0c] pr-[52px] pl-[109px] text-[9px] text-white">
      <div className="h-full w-9 bg-[#353535]" />
      <time className="pt-1 leading-3">15:52</time>
    </div>
    <Watermark />
  </div>
);

export default App;
